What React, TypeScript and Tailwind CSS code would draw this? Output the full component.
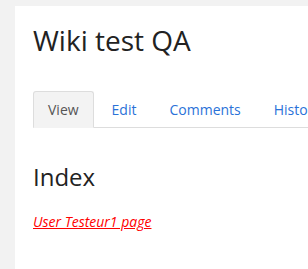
import React from 'react';

const tabs = ['View', 'Edit', 'Comments', 'History'];

const App: React.FC = () => {
  return (
    <div
      className="h-[269px] w-[308px] overflow-hidden bg-[#f2f2f2] pl-[15px] pt-[6px]"
      style={{ fontFamily: '"Open Sans", "Liberation Sans", sans-serif' }}
    >
      <div className="h-full w-[400px] bg-white px-[18px] pt-[16px]">
        {/* Page title */}
        <h1 className="text-[28px] leading-[36px] text-[#222]">Wiki test QA</h1>

        {/* Tabs */}
        <ul className="mt-[33px] flex border-b border-[#dddddd]">
          {tabs.map((tab, i) => (
            <li key={tab} className="mr-[3px] -mb-px">
              <a
                className={`block whitespace-nowrap rounded-t-[3px] border px-[14px] pt-[8px] pb-[7px] text-[14px] leading-[20px] ${
                  i === 0
                    ? 'border-[#dddddd] border-b-[#f3f3f3] bg-[#f3f3f3] text-[#555]'
                    : 'border-transparent text-[#2a72d8]'
                }`}
              >
                {tab}
              </a>
            </li>
          ))}
        </ul>

        {/* Content */}
        <h2 className="mt-[34px] text-[24px] leading-[30px] text-[#222]">Index</h2>
        <p className="mt-[20px] text-[14px] leading-[20px]">
          <a className="italic text-[#ff0000] underline">User Testeur1 page</a>
        </p>
      </div>
    </div>
  );
};

export default App;
